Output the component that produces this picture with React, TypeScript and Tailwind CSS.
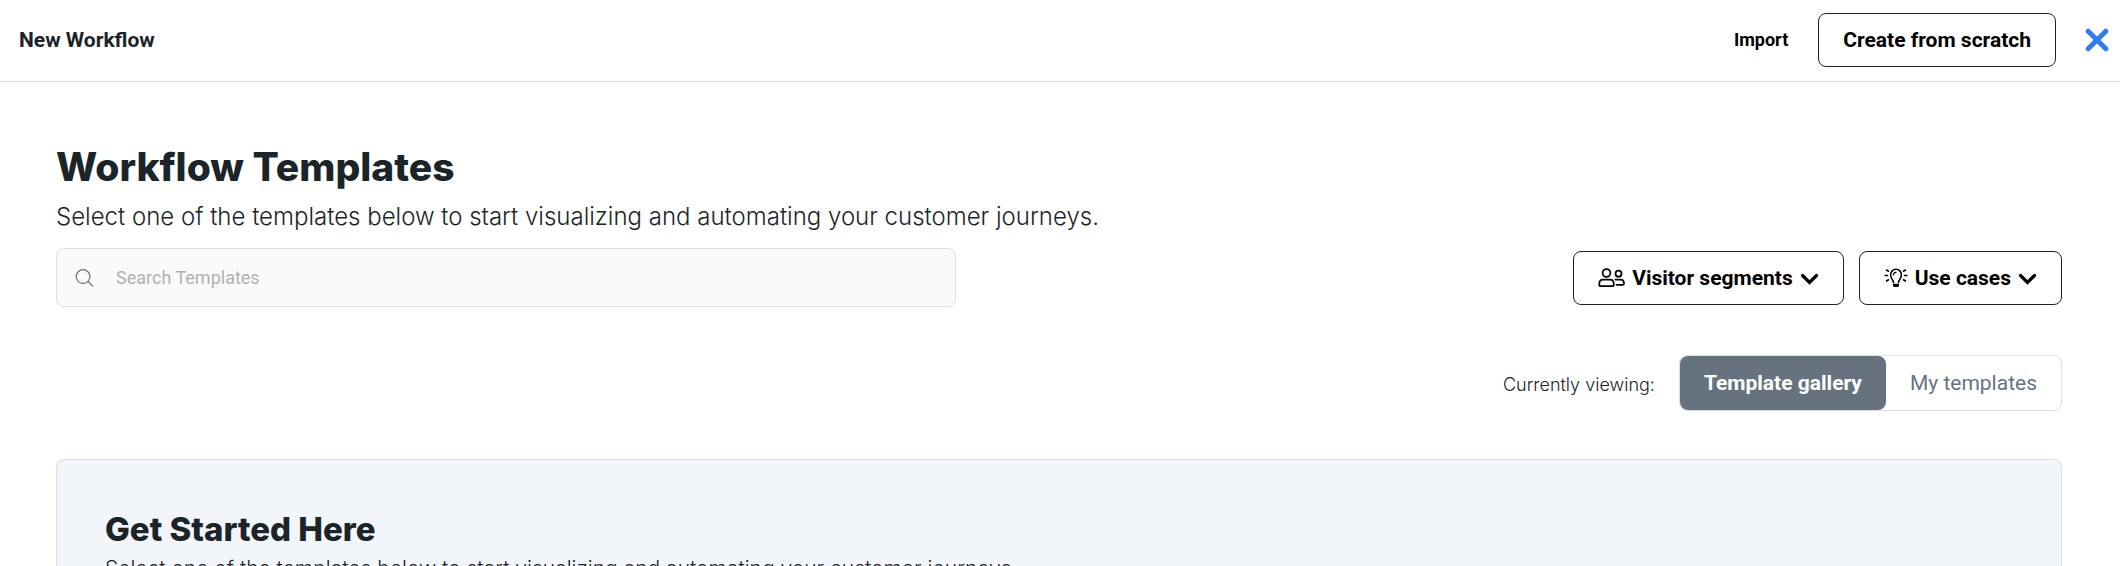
import React from "react"

//styles
import clsx from "clsx"

const outlineButton =
  "flex h-[54px] items-center gap-[7px] rounded-lg border border-[#1b2529] bg-white px-6 text-[21px] leading-8 font-bold text-black hover:bg-gray-50"

const subtitle =
  "Select one of the templates below to start visualizing and automating your customer journeys."

const tabs = ["Template gallery", "My templates"]

function CloseIcon() {
  return (
    <svg width="24" height="24" viewBox="0 0 24 24" fill="none">
      <path
        d="M3.2 3.2l17.6 17.6M20.8 3.2L3.2 20.8"
        stroke="#2f7bf6"
        strokeWidth="5"
        strokeLinecap="round"
      />
    </svg>
  )
}

function SearchIcon() {
  return (
    <svg width="20" height="20" viewBox="0 0 20 20" fill="none">
      <g stroke="#66737f" strokeWidth="1.25" strokeLinecap="round">
        <circle cx="8.5" cy="8.5" r="7.2" />
        <path d="M13.7 13.7L18.8 18.8" />
      </g>
    </svg>
  )
}

function PeopleIcon() {
  return (
    <svg width="27" height="20" viewBox="0 0 27 20" fill="none">
      <g stroke="currentColor" strokeWidth="1.75" strokeLinejoin="round">
        <circle cx="8.5" cy="5" r="3.9" />
        <path d="M1.2 16.5c0-3 1.5-4.9 3.7-4.9h7.2c2.2 0 3.7 1.9 3.7 4.9 0 1.2-.5 1.7-1.5 1.7H2.7c-1 0-1.5-.5-1.5-1.7z" />
        <circle cx="20.5" cy="5.7" r="3" />
        <path
          d="M17.3 11.6h5.3c2.2 0 3.4 1.5 3.4 3.9 0 .9-.4 1.3-1.2 1.3H18.5"
          strokeLinecap="round"
        />
      </g>
    </svg>
  )
}

function BulbIcon() {
  return (
    <svg width="24" height="20" viewBox="0 0 24 20" fill="none">
      <g stroke="currentColor" strokeWidth="1.6" strokeLinecap="round">
        <path d="M9.5 14.5c-.2-2.5-2.9-4-2.9-7.8a5.4 5.4 0 0 1 10.8 0c0 3.8-2.7 5.3-2.9 7.8" />
        <path d="M9.4 7a2.7 2.7 0 0 1 2.6-2.7" strokeWidth="1.2" />
        <path d="M1.2 7.5h2.3M20.5 7.5h2.3M2.5 2l2 1.2M21.5 2l-2 1.2M2.5 13l2-1.2M21.5 13l-2-1.2" />
      </g>
      <path
        d="M9 15.7h6v1.8c0 .9-.9 1.6-1.9 1.6h-2.2c-1 0-1.9-.7-1.9-1.6z"
        fill="currentColor"
      />
    </svg>
  )
}

function ChevronIcon() {
  return (
    <svg width="19" height="20" viewBox="0 0 19 20" fill="none">
      <path
        d="M2.5 7.5l7 7 7-7"
        stroke="currentColor"
        strokeWidth="3.2"
        strokeLinecap="round"
      />
    </svg>
  )
}

export default function App() {
  const [search, setSearch] = React.useState<string>("")
  const [activeTab, setActiveTab] = React.useState<string>(tabs[0])

  return (
    <div className="flex h-screen flex-col overflow-hidden bg-white font-['Roboto',sans-serif] text-[#1b2529]">
      <header className="flex shrink-0 items-center justify-between border-b border-[#dcdfe1] pt-[13px] pr-[10px] pb-[14px] pl-[19px]">
        <h1 className="text-[21px] leading-8 font-bold">New Workflow</h1>
        <div className="flex items-center">
          <button type="button" className="mr-[30px] text-lg font-bold text-black">
            Import
          </button>
          <button type="button" className={outlineButton}>
            Create from scratch
          </button>
          <button type="button" aria-label="Close" className="ml-7 p-px">
            <CloseIcon />
          </button>
        </div>
      </header>
      <main className="flex flex-1 flex-col pt-[60px] pr-[58px] pl-14">
        <h2 className="font-['Inter',sans-serif] text-[39px] leading-[50px] font-extrabold">
          Workflow Templates
        </h2>
        <p className="mt-[9px] font-['Inter',sans-serif] text-2xl leading-8 font-light">
          {subtitle}
        </p>
        <div className="mt-[15px] flex items-center justify-between">
          <label className="flex h-[59px] w-[900px] items-center gap-[22px] rounded-lg border border-[#dcdfe1] bg-[#fafafa] px-[18px]">
            <SearchIcon />
            <input
              type="text"
              aria-label="Search Templates"
              placeholder="Search Templates"
              value={search}
              onChange={(event) => setSearch(event.target.value)}
              className="w-full bg-transparent pt-px text-lg outline-none placeholder:text-[#b0b0b0]"
            />
          </label>
          <div className="flex gap-[15px]">
            <button type="button" className={outlineButton}>
              <PeopleIcon />
              Visitor segments
              <ChevronIcon />
            </button>
            <button type="button" className={outlineButton}>
              <BulbIcon />
              Use cases
              <ChevronIcon />
            </button>
          </div>
        </div>
        <div className="mt-12 flex items-center justify-end gap-6">
          <span className="pt-1 font-['Inter',sans-serif] text-lg font-light">
            Currently viewing:
          </span>
          <div className="flex h-14 rounded-lg border border-[#dcdfe1]">
            {tabs.map((tab) => (
              <button
                key={tab}
                type="button"
                onClick={() => setActiveTab(tab)}
                className={clsx(
                  "rounded-lg px-6 text-[21px] leading-8",
                  activeTab === tab
                    ? "bg-[#66737f] font-bold text-white"
                    : "text-[#66737f]",
                )}
              >
                {tab}
              </button>
            ))}
          </div>
        </div>
        <section className="mt-12 flex-1 rounded-t-lg border border-b-0 border-[#dcdfe1] bg-[#f2f5fa] px-12 pt-[49px]">
          <h3 className="font-['Inter',sans-serif] text-[33px] leading-10 font-extrabold">
            Get Started Here
          </h3>
          <p className="mt-1.5 font-['Inter',sans-serif] text-[21px] leading-7 font-light whitespace-nowrap">
            {subtitle}
          </p>
        </section>
      </main>
    </div>
  )
}
